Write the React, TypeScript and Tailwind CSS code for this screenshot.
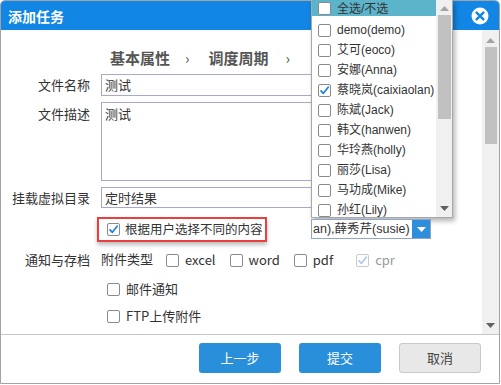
import React from "react";

const FONT = { fontFamily: '"Noto Sans CJK SC", "Noto Sans", sans-serif' };
const LIST_FONT = { fontFamily: '"Liberation Sans", "Noto Sans CJK SC", sans-serif' };

function Box({ checked = false, disabled = false }: { checked?: boolean; disabled?: boolean }) {
  return (
    <span
      className={`inline-flex h-[13px] w-[13px] shrink-0 items-center justify-center rounded-[2px] border bg-white ${
        disabled ? "border-[#c9c9c9]" : "border-[#8a8a8a]"
      }`}
    >
      {checked && (
        <svg width="11" height="11" viewBox="0 0 11 11">
          <path
            d="M2 5.8 L4.4 8.3 L9.2 2.2"
            fill="none"
            stroke={disabled ? "#a9cdee" : "#1c7fd9"}
            strokeWidth="1.7"
            strokeLinecap="round"
            strokeLinejoin="round"
          />
        </svg>
      )}
    </span>
  );
}

const users = [
  { n: "demo(demo)" },
  { n: "艾可(eoco)" },
  { n: "安娜(Anna)" },
  { n: "蔡晓岚(caixiaolan)", c: true },
  { n: "陈斌(Jack)" },
  { n: "韩文(hanwen)" },
  { n: "华玲燕(holly)" },
  { n: "丽莎(Lisa)" },
  { n: "马功成(Mike)" },
  { n: "孙红(Lily)" },
];

export default function App() {
  return (
    <div className="relative h-[385px] w-[501px] overflow-hidden bg-white text-[#333]" style={FONT}>
      <div className="flex h-[384px] w-[500px] flex-col rounded-t-[5px] border border-[#a3a3a3] bg-white">
        {/* Title bar */}
        <div className="flex h-[29px] shrink-0 items-center justify-between rounded-t-[4px] bg-[#1186e4] pl-[7px] pr-[10px]">
          <span className="text-[14px] font-bold leading-none text-white">添加任务</span>
          <svg width="18" height="18" viewBox="0 0 18 18">
            <circle cx="9" cy="9" r="8.5" fill="#fff" />
            <path d="M5.6 5.6 L12.4 12.4 M12.4 5.6 L5.6 12.4" stroke="#1186e4" strokeWidth="2.4" strokeLinecap="round" />
          </svg>
        </div>

        {/* Body */}
        <div className="flex h-[305px] shrink-0 border-b border-[#c6c6c6]">
          <div className="flex-1 pt-[17px]">
            {/* Steps */}
            <div className="flex h-[20px] items-center pl-[109px] text-[15px] font-bold leading-none text-[#555]">
              <span>基本属性</span>
              <span className="ml-[15px] text-[15px] font-normal">›</span>
              <span className="ml-[19px]">调度周期</span>
              <span className="ml-[17px] text-[15px] font-normal">›</span>
            </div>

            {/* Name */}
            <div className="mt-[7px] flex items-center gap-[11px]">
              <div className="w-[89px] text-right text-[13px]">文件名称</div>
              <div className="flex h-[22px] w-[340px] items-center border border-[#a9a8c6] px-[3px] text-[13px]">测试</div>
            </div>
            {/* Desc */}
            <div className="mt-[6px] flex gap-[11px]">
              <div className="w-[89px] pt-[2px] text-right text-[13px]">文件描述</div>
              <div className="h-[79px] w-[340px] border border-[#a9a8c6] px-[3px] pt-[1px] text-[13px]">测试</div>
            </div>
            {/* Dir */}
            <div className="mt-[6px] flex items-center gap-[11px]">
              <div className="w-[89px] text-right text-[13px]">挂载虚拟目录</div>
              <div className="flex h-[21px] w-[340px] items-center border border-[#a9a8c6] px-[3px] text-[13px]">定时结果</div>
            </div>

            {/* Red box */}
            <div className="mt-[9px] pl-[96px]">
              <div className="flex h-[25px] w-[170px] items-center gap-[5px] whitespace-nowrap border-2 border-[#ea3f3f] pl-[8px] text-[12.5px] shadow-[0_3px_4px_rgba(0,0,0,0.25)]">
                <Box checked />
                <span className="leading-none">根据用户选择不同的内容</span>
              </div>
            </div>

            {/* Notify */}
            <div className="mt-[8px] flex h-[20px] items-center gap-[11px] text-[13px]">
              <div className="w-[89px] text-right">通知与存档</div>
              <span className="-mt-[3px]">附件类型</span>
              <div className="ml-[2px] flex items-center gap-[6px]">
                <Box />
                <span>excel</span>
              </div>
              <div className="ml-[3px] flex items-center gap-[6px]">
                <Box />
                <span>word</span>
              </div>
              <div className="ml-[3px] flex items-center gap-[6px]">
                <Box />
                <span>pdf</span>
              </div>
              <div className="ml-[12px] flex items-center gap-[6px] text-[#9a9a9a]">
                <Box checked disabled />
                <span>cpr</span>
              </div>
            </div>
            <div className="mt-[9px] flex h-[20px] items-center gap-[6px] pl-[106px] text-[13px]">
              <Box />
              <span>邮件通知</span>
            </div>
            <div className="mt-[7px] flex h-[20px] items-center gap-[6px] pl-[106px] text-[13px]">
              <Box />
              <span>FTP上传附件</span>
            </div>
          </div>

          {/* Main scrollbar */}
          <div className="flex w-[17px] shrink-0 flex-col items-center bg-[#f0f0f0] pt-[8px]">
            <svg width="9" height="5" viewBox="0 0 9 5">
              <path d="M0 5 L4.5 0 L9 5 Z" fill="#a3a3a3" />
            </svg>
            <div className="mt-[4px] h-[97px] w-[12px] bg-[#c1c1c1]" />
            <div className="flex-1" />
            <svg className="mb-[6px]" width="9" height="5" viewBox="0 0 9 5">
              <path d="M0 0 L4.5 5 L9 0 Z" fill="#606060" />
            </svg>
          </div>
        </div>

        {/* Footer */}
        <div className="flex flex-1 justify-end gap-[18px] pr-[18px] pt-[8px] text-[13px]">
          <div className="flex h-[30px] w-[82px] items-center justify-center rounded-[3px] bg-[#2a8fda] text-white">上一步</div>
          <div className="flex h-[30px] w-[82px] items-center justify-center rounded-[3px] bg-[#2a8fda] text-white">提交</div>
          <div className="flex h-[30px] w-[82px] items-center justify-center rounded-[3px] border border-[#c9c9c9] bg-[#e8e8e8] text-[#444]">取消</div>
        </div>
      </div>

      {/* Dropdown list overlay */}
      <div className="absolute left-[311px] top-0 flex h-[218px] w-[142px] border border-t-0 border-[#a8a8a8] bg-white shadow-[2px_3px_5px_rgba(0,0,0,0.3)]">
        <div className="flex-1 overflow-hidden text-[12px]" style={LIST_FONT}>
          <div className="flex h-[16px] items-center gap-[6px] bg-[#5bb4c9] pl-[6px] pt-[1px]">
            <Box />
            <span className="leading-none">全选/不选</span>
          </div>
          <div className="mt-[4px]">
            {users.map((u) => (
              <div key={u.n} className="flex h-[20px] items-center gap-[6px] pl-[6px]">
                <Box checked={!!u.c} />
                <span className="whitespace-nowrap leading-none">{u.n}</span>
              </div>
            ))}
          </div>
        </div>
        <div className="flex w-[16px] shrink-0 flex-col items-center bg-[#f0f0f0] pt-[6px]">
          <svg width="9" height="5" viewBox="0 0 9 5">
            <path d="M0 5 L4.5 0 L9 5 Z" fill="#a3a3a3" />
          </svg>
          <div className="mt-[4px] h-[104px] w-[13px] bg-[#c1c1c1]" />
          <div className="flex-1" />
          <svg className="mb-[6px]" width="9" height="5" viewBox="0 0 9 5">
            <path d="M0 0 L4.5 5 L9 0 Z" fill="#606060" />
          </svg>
        </div>
      </div>

      {/* Select field */}
      <div className="absolute left-[311px] top-[219px] flex h-[20px] w-[120px] overflow-hidden border border-[#8fa6c6] bg-white">
        <div className="flex flex-1 items-center overflow-hidden pl-[1px]" style={LIST_FONT}>
          <span className="whitespace-nowrap text-[12.5px] leading-none text-[#333]">an),薛秀芹(susie)</span>
        </div>
        <div className="flex w-[18px] shrink-0 items-center justify-center bg-[#2f8edb]">
          <svg width="9" height="5" viewBox="0 0 9 5">
            <path d="M0 0 L4.5 5 L9 0 Z" fill="#fff" />
          </svg>
        </div>
      </div>
    </div>
  );
}
